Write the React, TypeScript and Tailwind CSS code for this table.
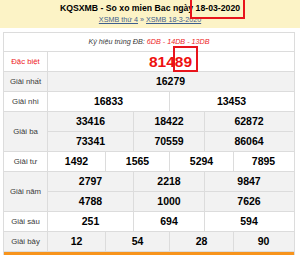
import React from "react";

const F = { fontFamily: '"Liberation Sans", Arial, sans-serif' };

function Label({ text, red, h }: { text: string; red?: boolean; h: string }) {
  return (
    <div className={`w-[44px] shrink-0 border-r border-[#dcdcdc] flex items-center justify-center text-[7.8px] ${h} ${red ? "text-[#ee1c25]" : "text-[#3a3a3a]"}`}>
      {text}
    </div>
  );
}

function Cell({ v, w, last }: { v: string; w: string; last?: boolean }) {
  return (
    <div className={`${w} shrink-0 flex items-center justify-center text-[10.5px] font-bold text-black ${last ? "" : "border-r border-[#dcdcdc]"}`}>
      {v}
    </div>
  );
}

function Row2({ vals, bg, label }: { vals: string[]; bg: string; label: string }) {
  return (
    <div className={`flex h-[20px] border-b border-[#dcdcdc] ${bg}`}>
      <Label text={label} h="h-[19px]" />
      <Cell v={vals[0]} w="w-[122px]" />
      <Cell v={vals[1]} w="w-[123px]" last />
    </div>
  );
}

function Row3({ label, lines, bg }: { label: string; lines: string[][]; bg: string }) {
  return (
    <div className={`flex border-b border-[#dcdcdc] ${bg}`}>
      <Label text={label} h="" />
      <div className="flex flex-col">
        {lines.map((l, i) => {
          const notLast = i < lines.length - 1;
          return (
            <div key={i} className={notLast ? "flex h-[20px] border-b border-[#dcdcdc]" : "flex h-[19px]"}>
              <Cell v={l[0]} w="w-[86px]" />
              <Cell v={l[1]} w="w-[71px]" />
              <Cell v={l[2]} w="w-[88px]" last />
            </div>
          );
        })}
      </div>
    </div>
  );
}

function Row4({ label, vals, bg }: { label: string; vals: string[]; bg: string }) {
  return (
    <div className={`flex h-[20px] border-b border-[#dcdcdc] ${bg}`}>
      <Label text={label} h="h-[19px]" />
      <Cell v={vals[0]} w="w-[58px]" />
      <Cell v={vals[1]} w="w-[64px]" />
      <Cell v={vals[2]} w="w-[64px]" />
      <Cell v={vals[3]} w="w-[59px]" last />
    </div>
  );
}

export default function App() {
  return (
    <div className="relative w-[300px] h-[255px] overflow-hidden bg-white" style={F}>
      <div className="h-[28px] bg-[#fcf3c6] flex flex-col items-center pt-[3px]">
        <div className="text-[8.7px] font-bold leading-[11px] text-black">KQSXMB - So xo mien Bac ngày 18-03-2020</div>
        <div className="text-[7.2px] leading-[10px] mt-[1px] text-[#3d5f8e]">
          <span className="underline">XSMB thứ 4</span> » <span className="underline">XSMB 18-3-2020</span>
        </div>
      </div>
      <div className="mt-[4px] ml-[3px] w-[292px] border-x border-t border-[#dcdcdc]">
        <div className="h-[19px] border-b border-[#dcdcdc] flex items-center justify-center text-[7.2px] italic text-[#3a3a3a]">
          Ký hiệu trúng ĐB:&nbsp;<span className="text-[#ee1c25]">6DB - 14DB - 13DB</span>
        </div>
        <div className="flex h-[20px] border-b border-[#dcdcdc] bg-white">
          <Label text="Đặc biệt" red h="h-[19px]" />
          <div className="w-[245px] flex items-center justify-center text-[15.5px] font-bold text-[#ee1111]">81489</div>
        </div>
        <div className="flex h-[20px] border-b border-[#dcdcdc] bg-[#f2f2f2]">
          <Label text="Giải nhất" h="h-[19px]" />
          <div className="w-[245px] flex items-center justify-center text-[10.5px] font-bold text-black">16279</div>
        </div>
        <Row2 label="Giải nhì" vals={["16833", "13453"]} bg="bg-white" />
        <Row3 label="Giải ba" bg="bg-[#f2f2f2]" lines={[["33416", "18422", "62872"], ["73341", "70559", "86064"]]} />
        <Row4 label="Giải tư" vals={["1492", "1565", "5294", "7895"]} bg="bg-white" />
        <Row3 label="Giải năm" bg="bg-[#f2f2f2]" lines={[["2797", "2218", "9847"], ["4788", "1000", "7626"]]} />
        <Row3 label="Giải sáu" bg="bg-white" lines={[["251", "694", "594"]]} />
        <Row4 label="Giải bảy" vals={["12", "54", "28", "90"]} bg="bg-[#f2f2f2]" />
        <div className="h-[24px] bg-[#f7941d] flex justify-center pt-[3px] text-[11px] font-bold text-white">XEM THÊM KẾT QUẢ XỔ SỐ</div>
      </div>
      <div className="absolute left-[190px] top-[-6px] w-[55px] h-[25px] border-2 border-[#e8141c]" />
      <div className="absolute left-[173px] top-[46px] w-[25px] h-[26px] border-2 border-[#e8141c]" />
    </div>
  );
}
